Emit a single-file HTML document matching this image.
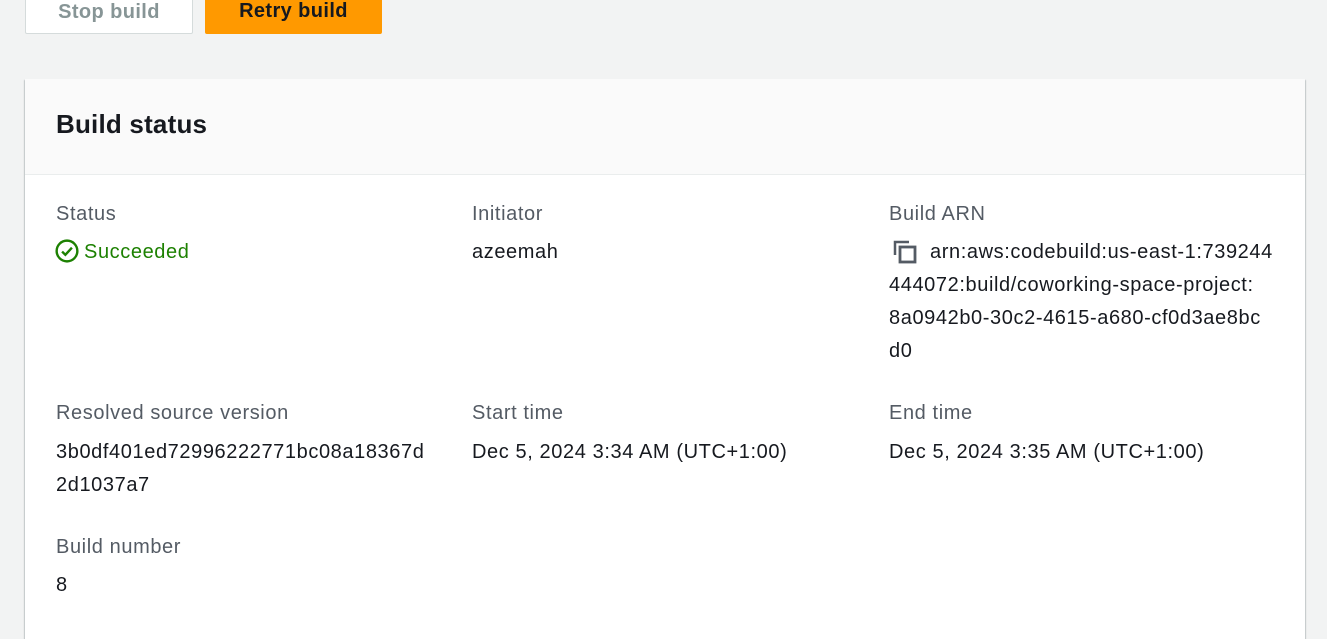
<!DOCTYPE html>
<html><head><meta charset="utf-8"><style>
body{margin:0;width:1327px;height:616px;background:#f2f3f3;font-family:"Liberation Sans",sans-serif;overflow:hidden;position:relative;color:#16191f}
.btn{position:absolute;top:-4px;height:38px;box-sizing:border-box;border-radius:2px;font-weight:bold;font-size:20px;letter-spacing:0.4px;text-align:center;line-height:30px}
.card{position:absolute;left:25px;top:79px;width:1280px;height:560px;background:#fff;box-shadow:0 1px 1px 0 rgba(0,28,36,.3),1px 1px 1px 0 rgba(0,28,36,.15),-1px 1px 1px 0 rgba(0,28,36,.15)}
.hdr{height:95px;background:#fafafa;border-bottom:1px solid #eaeded}
.t{position:absolute;font-size:20px;letter-spacing:0.6px;white-space:nowrap;line-height:33px}
.l{color:#545b64}
</style></head><body>
<div class="btn" style="left:25px;width:168px;background:#fff;border:1px solid #d5dbdb;color:#879596">Stop build</div>
<div class="btn" style="left:205px;width:177px;background:#ff9900;color:#16191f">Retry build</div>
<div class="card"><div class="hdr"></div></div>
<div class="t" style="left:56px;top:108px;font-size:26px;letter-spacing:0.2px;font-weight:bold">Build status</div>

<div class="t l" style="left:56px;top:198px">Status</div>
<div class="t" style="left:55px;top:236px;color:#1d8102">
<svg width="24" height="24" viewBox="0 0 22 22" style="vertical-align:-5px;margin-right:5px"><circle cx="11" cy="11" r="9.5" fill="none" stroke="#1d8102" stroke-width="2.2"/><path d="M6.5 11.5l3 3 6-6.5" fill="none" stroke="#1d8102" stroke-width="2.2"/></svg>Succeeded</div>

<div class="t l" style="left:472px;top:198px">Initiator</div>
<div class="t" style="left:472px;top:236px">azeemah</div>

<div class="t l" style="left:889px;top:198px">Build ARN</div>
<div class="t" style="left:893px;top:236px"><svg width="26" height="24" viewBox="0 0 26 24" style="vertical-align:-6px;margin-right:11px"><path d="M2 15V2h14" fill="none" stroke="#545b64" stroke-width="2.5"/><rect x="7" y="7" width="15" height="15" fill="none" stroke="#545b64" stroke-width="2.8"/></svg>arn:aws:codebuild:us-east-1:739244</div>
<div class="t" style="left:889px;top:269px">444072:build/coworking-space-project:</div>
<div class="t" style="left:889px;top:302px">8a0942b0-30c2-4615-a680-cf0d3ae8bc</div>
<div class="t" style="left:889px;top:335px">d0</div>

<div class="t l" style="left:56px;top:397px">Resolved source version</div>
<div class="t" style="left:56px;top:436px">3b0df401ed72996222771bc08a18367d</div>
<div class="t" style="left:56px;top:469px">2d1037a7</div>

<div class="t l" style="left:472px;top:397px">Start time</div>
<div class="t" style="left:472px;top:436px">Dec 5, 2024 3:34 AM (UTC+1:00)</div>

<div class="t l" style="left:889px;top:397px">End time</div>
<div class="t" style="left:889px;top:436px">Dec 5, 2024 3:35 AM (UTC+1:00)</div>

<div class="t l" style="left:56px;top:531px">Build number</div>
<div class="t" style="left:56px;top:569px">8</div>
</body></html>
